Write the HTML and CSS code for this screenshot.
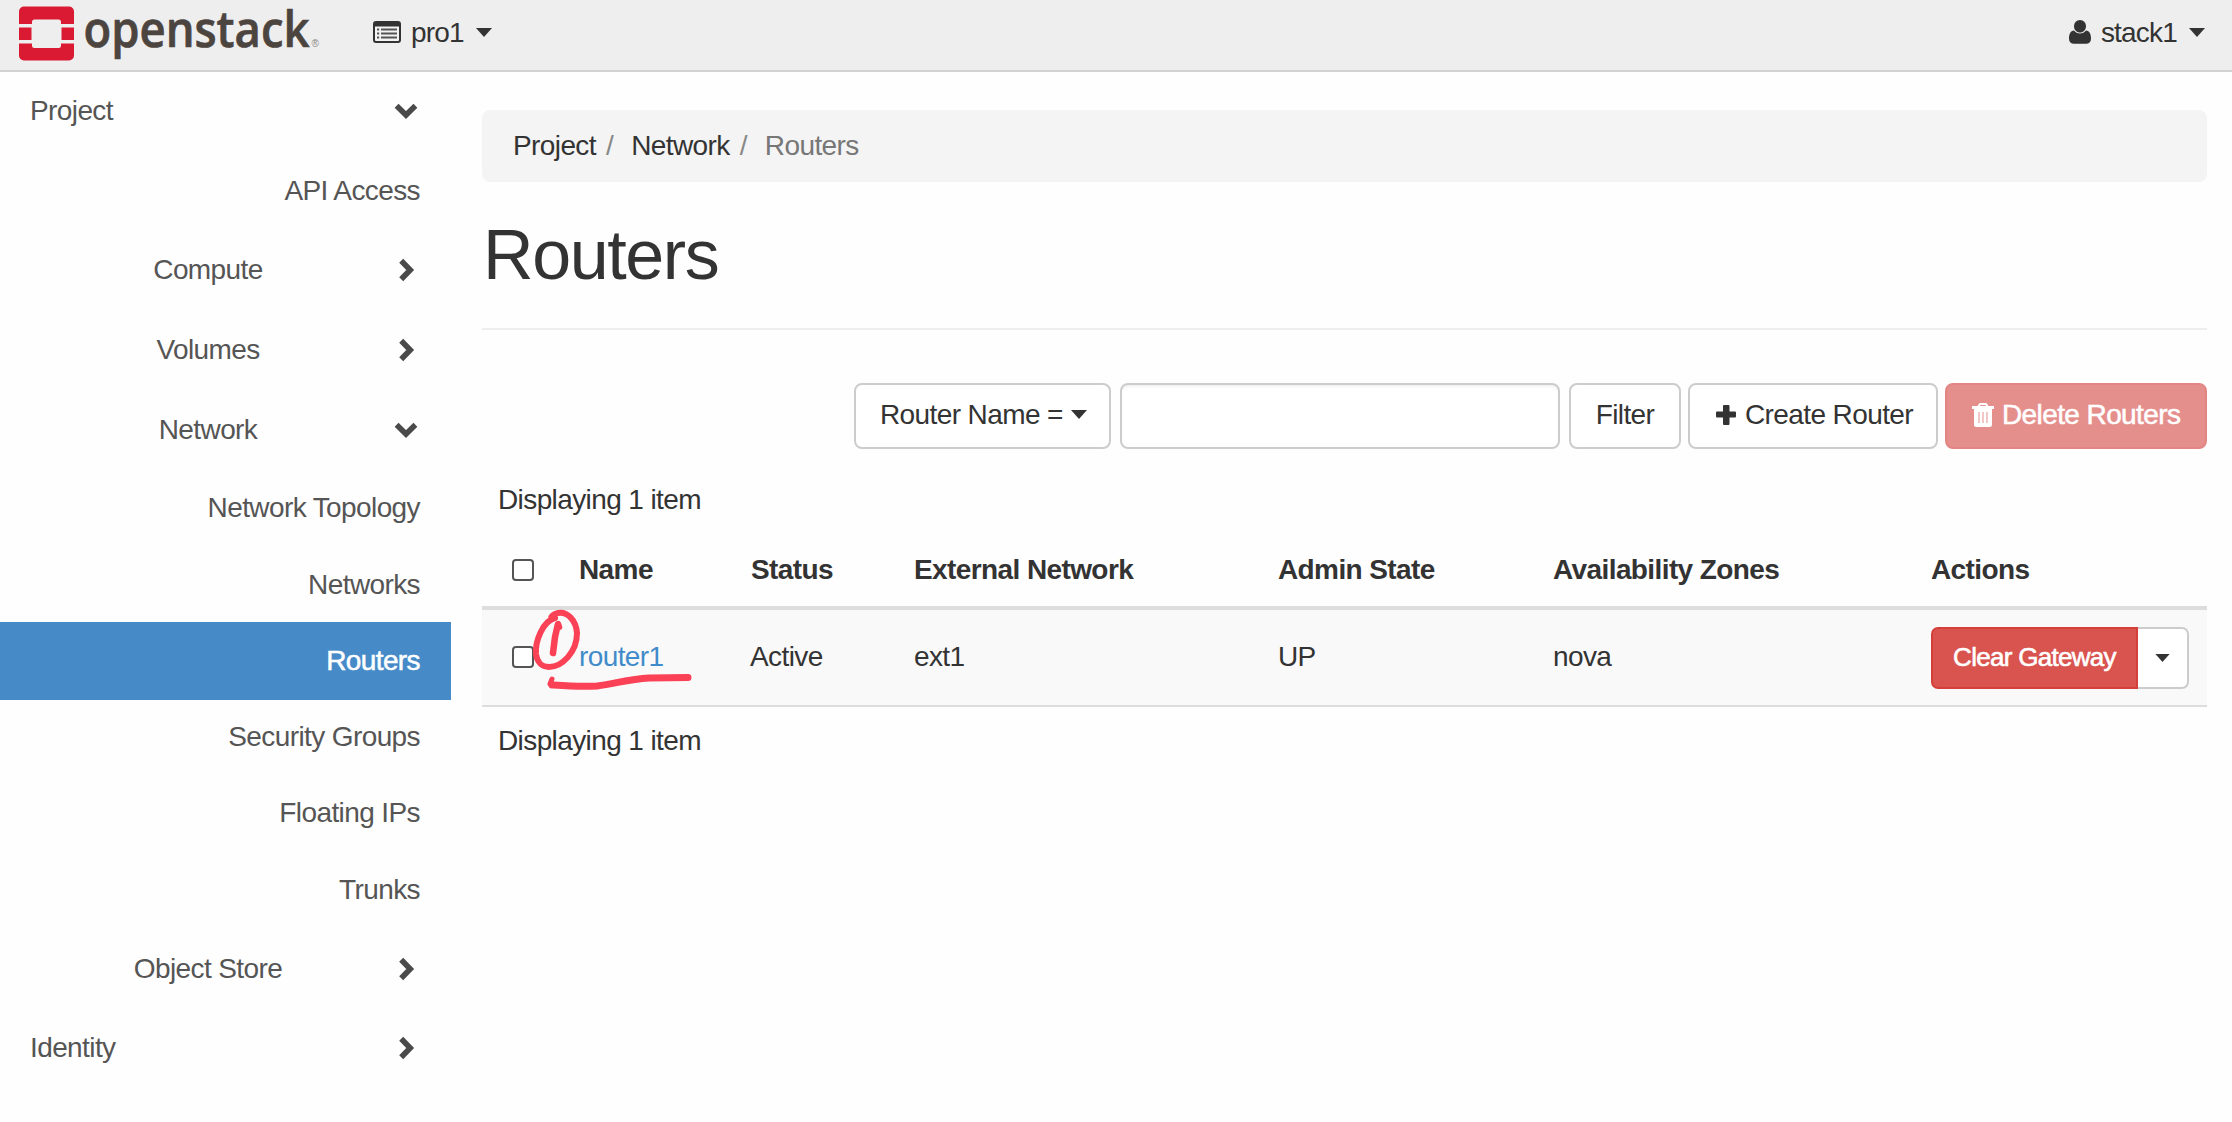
FILE: index.html
```html
<!DOCTYPE html>
<html lang="en">
<head>
<meta charset="utf-8">
<title>Routers - OpenStack Dashboard</title>
<link rel="stylesheet" href="styles.css">
</head>
<body>
<svg class="defs" width="0" height="0" aria-hidden="true">
  <symbol id="right" viewBox="0 0 24 24"><path d="M7.200 2.800 16.200 12 7.200 21.200" fill="none" stroke="currentColor" stroke-width="5.600"/></symbol>
  <symbol id="down" viewBox="0 0 24 24"><path d="M2.600 6.800 12 16 21.400 6.800" fill="none" stroke="currentColor" stroke-width="5.600"/></symbol>
  <symbol id="caret" viewBox="0 0 16 9"><path d="M0 0h16L8 9z" fill="currentColor"/></symbol>
</svg>
<header class="topbar">
  <a class="brand">
    <svg class="logo" width="330" height="70" viewBox="0 0 330 70">
      <path fill="#da1a32" d="M24 6.500h45a5 5 0 0 1 5 5V24H61v-2a2.500 2.500 0 0 0-2.500-2.500h-24A2.500 2.500 0 0 0 32 22v2H19V11.500a5 5 0 0 1 5-5zM19 27.500h12.500V40H19zM61.500 27.500H74V40H61.500zM19 43.500h13v2a2.500 2.500 0 0 0 2.500 2.500h24a2.500 2.500 0 0 0 2.500-2.500v-2h13v12a5 5 0 0 1-5 5H24a5 5 0 0 1-5-5z"/>
      <text class="wordmark" x="83.500" y="47" textLength="226" lengthAdjust="spacingAndGlyphs">openstack</text>
      <text class="reg" x="311.500" y="47">®</text>
    </svg>
  </a>
  <div class="menu project-menu">
    <svg class="list-icon" width="28" height="22" viewBox="0 0 28 22"><rect x="1" y="1" width="26" height="20" rx="2" fill="#f4f4f4" stroke="#333" stroke-width="2"/><path d="M1 1h26v4.500H1z" fill="#333"/><path d="M8 8.500h16M8 12.500h16M8 16.500h16M4 8.500h2.200M4 12.500h2.200M4 16.500h2.200" stroke="#555" stroke-width="2"/></svg>
    <span>pro1</span><svg class="caret" width="16" height="9"><use href="#caret"/></svg>
  </div>
  <div class="menu user-menu">
    <svg class="user-icon" width="22" height="24" viewBox="0 0 22 24"><path fill="#333" d="M11 0a6 6 0 0 1 6 6.200c0 3.400-2.600 6.300-6 6.300S5 9.600 5 6.200A6 6 0 0 1 11 0zM5 10.600c1.500 2 3.600 3 6 3s4.500-1 6-3c3.600.4 5 3.800 5 8.200 0 3-1.700 4.900-4.200 4.900H4.200C1.700 23.700 0 21.800 0 18.800c0-4.400 1.400-7.800 5-8.200z"/></svg>
    <span>stack1</span><svg class="caret" width="16" height="9"><use href="#caret"/></svg>
  </div>
</header>
<div class="layout">
  <nav class="sidebar">
    <a class="top"><span>Project</span><svg class="chev" width="24" height="24"><use href="#down"/></svg></a>
    <a class="leaf api">API Access</a>
    <a class="group compute"><span>Compute</span><svg class="chev" width="24" height="24"><use href="#right"/></svg></a>
    <a class="group volumes"><span>Volumes</span><svg class="chev" width="24" height="24"><use href="#right"/></svg></a>
    <a class="group network"><span>Network</span><svg class="chev" width="24" height="24"><use href="#down"/></svg></a>
    <a class="leaf topology">Network Topology</a>
    <a class="leaf networks">Networks</a>
    <a class="leaf active">Routers</a>
    <a class="leaf security">Security Groups</a>
    <a class="leaf floating">Floating IPs</a>
    <a class="leaf trunks">Trunks</a>
    <a class="group object"><span>Object Store</span><svg class="chev" width="24" height="24"><use href="#right"/></svg></a>
    <a class="top identity"><span>Identity</span><svg class="chev" width="24" height="24"><use href="#right"/></svg></a>
  </nav>
  <main class="content">
    <ol class="breadcrumb"><li>Project</li><li>Network</li><li class="current">Routers</li></ol>
    <h1>Routers</h1>
    <div class="toolbar">
      <button class="btn name-filter">Router Name =<svg class="caret" width="16" height="9"><use href="#caret"/></svg></button>
      <input class="search" type="text" aria-label="Filter value">
      <button class="btn filter">Filter</button>
      <button class="btn create"><svg width="20" height="20" viewBox="0 0 20 20"><path fill="#333" d="M8 0h4.500a1 1 0 0 1 1 1v5.500H19a1 1 0 0 1 1 1v4a1 1 0 0 1-1 1h-5.500V19a1 1 0 0 1-1 1H8a1 1 0 0 1-1-1v-6.500H1a1 1 0 0 1-1-1v-4a1 1 0 0 1 1-1h6V1a1 1 0 0 1 1-1z"/></svg>Create Router</button>
      <button class="btn delete"><svg width="22" height="24" viewBox="0 0 22 24"><path fill="#fff" fill-rule="evenodd" d="M7.500 0h7l2 3H22v3h-2v15.500a2.500 2.500 0 0 1-2.500 2.500h-13A2.500 2.500 0 0 1 2 21.500V6H0V3h5.500zM8.500 2l-.6 1h6.200l-.6-1zM6.500 9v11h1V9zm4 0v11h1V9zm4 0v11h1V9z"/></svg>Delete Routers</button>
    </div>
    <div class="table-wrap">
      <p class="count">Displaying 1 item</p>
      <table>
        <colgroup><col class="c-check"><col class="c-name"><col class="c-status"><col class="c-ext"><col class="c-admin"><col class="c-zone"><col class="c-actions"></colgroup>
        <thead><tr><th><input class="check" type="checkbox" aria-label="Select all"></th><th>Name</th><th class="status">Status</th><th>External Network</th><th>Admin State</th><th>Availability Zones</th><th>Actions</th></tr></thead>
        <tbody><tr><td><input class="check" type="checkbox" aria-label="Select router1"></td><td><a class="link">router1</a></td><td>Active</td><td>ext1</td><td>UP</td><td>nova</td><td><div class="actions"><button class="clear">Clear Gateway</button><button class="more" aria-label="More actions"><svg width="15" height="8"><use href="#caret"/></svg></button></div></td></tr></tbody>
      </table>
      <p class="count">Displaying 1 item</p>
      <svg class="marker" width="170" height="90" viewBox="530 605 170 90" fill="none" stroke="#fb4156" stroke-linecap="round" stroke-linejoin="round">
        <path stroke-width="6" d="M554 618C542 621 534 641 535 654C536 662 541 667 548 667C561 667 576 652 576 633C575 620 566 611 557 613C553 614 550 616 550 619"/>
        <path stroke-width="6.500" d="M558 627L557 624L554 637L552 653"/>
        <path stroke-width="5" d="M551 679L549 684"/>
        <path stroke-width="7" d="M551 685C566 686 580 687 596 686C614 684 627 679 648 678L687 677.500"/>
      </svg>
    </div>
  </main>
</div>
</body>
</html>
```
FILE: styles.css
```css
* { box-sizing: border-box; }
body { margin: 0; width: 2232px; height: 1122px; overflow: hidden; background: #fefefe; color: #333; font: 28px/40px "Liberation Sans", Arial, sans-serif; letter-spacing: -.6px; }
svg { display: block; flex: none; }
.defs { position: absolute; }
button, input { font: inherit; letter-spacing: inherit; color: inherit; margin: 0; }

.topbar { height: 72px; background: #eee; border-bottom: 2px solid #d2d2d2; display: flex; align-items: center; padding-right: 27px; }
.brand { display: block; height: 70px; width: 373px; }
.wordmark { font: 600 50px/50px "Open Sans", "Noto Sans", sans-serif; letter-spacing: 0; fill: #4c443e; stroke: #4c443e; stroke-width: .7px; }
.reg { font-size: 10px; fill: #8a8580; letter-spacing: 0; }
.menu { display: flex; align-items: center; height: 70px; padding-bottom: 6px; }
.menu span { margin: 0 12px 0 10px; padding-top: 2px; letter-spacing: -.8px; }
.user-menu { margin-left: auto; }

.layout { display: flex; }
.sidebar { width: 451px; flex: none; color: #555; }
.sidebar a { display: flex; align-items: center; height: 76px; }
.chev { color: #4a4a4a; }
.sidebar .top { height: 78px; padding: 0 33px 0 30px; justify-content: space-between; }
.sidebar .group span { width: 416px; text-align: center; }
.sidebar .group { padding-right: 33px; }
.group .chev { margin-left: -22px; }
.sidebar .leaf { justify-content: flex-end; padding-right: 31px; }
.sidebar .api { height: 82px; }
.sidebar .volumes { height: 84px; }
.sidebar .topology { height: 80px; }
.sidebar .networks { height: 74px; }
.sidebar .active { height: 78px; background: #468bc8; color: #fff; -webkit-text-stroke: .5px #fff; }
.sidebar .security { height: 73px; }
.sidebar .floating { height: 80px; }
.sidebar .trunks { height: 73px; }
.sidebar .object { height: 86px; }
.sidebar .identity { height: 71px; }

.content { width: 1725px; margin: 38px 0 0 31px; }
.breadcrumb { display: flex; margin: 0; padding: 0 0 0 31px; list-style: none; height: 72px; align-items: center; background: #f4f4f4; border-radius: 8px; }
.breadcrumb li + li::before { content: "/"; color: #888; margin: 0 18px 0 10px; }
.breadcrumb .current { color: #777; }
h1 { margin: 0; height: 148px; padding: 33px 0 0 1px; font-size: 70px; line-height: 80px; font-weight: 400; letter-spacing: -1.4px; border-bottom: 2px solid #eee; }

.toolbar { display: flex; justify-content: flex-end; margin-top: 53px; height: 66px; }
.btn { display: flex; align-items: center; height: 66px; border: 2px solid #ccc; border-radius: 8px; background: #fff; padding: 0 0 2px; white-space: nowrap; }
.btn svg { margin-bottom: 1px; }
.name-filter { width: 257px; padding-left: 24px; margin-right: 9px; }
.name-filter .caret { margin-left: 8px; }
.search { width: 440px; height: 66px; border: 2px solid #ccc; border-radius: 8px; background: #fff; margin-right: 9px; box-shadow: inset 0 2px 2px #0000000d; }
.filter { width: 112px; justify-content: center; margin-right: 7px; }
.create { width: 250px; padding-left: 26px; gap: 9px; margin-right: 7px; }
.delete { width: 262px; padding-left: 25px; gap: 8px; background: #e58f8d; border-color: #e38683; color: #fff; -webkit-text-stroke: .5px #fff; }

.table-wrap { position: relative; padding-top: 31px; }
.count { margin: 0; padding: 0 0 0 16px; height: 39px; }
table { table-layout: fixed; width: 1725px; border-collapse: separate; border-spacing: 0; margin-bottom: 14px; }
.c-check { width: 96px; } .c-name { width: 171px; } .c-status { width: 164px; } .c-ext { width: 364px; } .c-admin { width: 275px; } .c-zone { width: 378px; } .c-actions { width: 277px; }
th, td { padding: 0 0 0 1px; text-align: left; vertical-align: middle; white-space: nowrap; letter-spacing: -.6px; }
th { height: 91px; border-bottom: 4px solid #ddd; padding-top: 24px; padding-bottom: 9px; }
th.status { padding-left: 2px; }
td { height: 97px; background: #f9f9f9; border-bottom: 2px solid #ddd; padding-bottom: 2px; }
.check { appearance: none; display: block; width: 22px; height: 22px; border: 2px solid #555; border-radius: 4px; background: #fff; margin-left: 29px; }
.link { color: #428bca; }
.actions { display: flex; height: 62px; margin: 2px 0 0; }
.clear { width: 207px; border: 2px solid #d43f3a; border-radius: 7px 0 0 7px; background: #d9534f; color: #fff; font-size: 26px; letter-spacing: -.7px; padding: 0 0 2px; white-space: nowrap; -webkit-text-stroke: .6px #fff; }
.more { width: 51px; display: flex; align-items: center; justify-content: center; border: 2px solid #ccc; border-left: 0; border-radius: 0 7px 7px 0; background: #fff; padding: 0; }
.marker { position: absolute; left: 49px; top: 156px; }
```
